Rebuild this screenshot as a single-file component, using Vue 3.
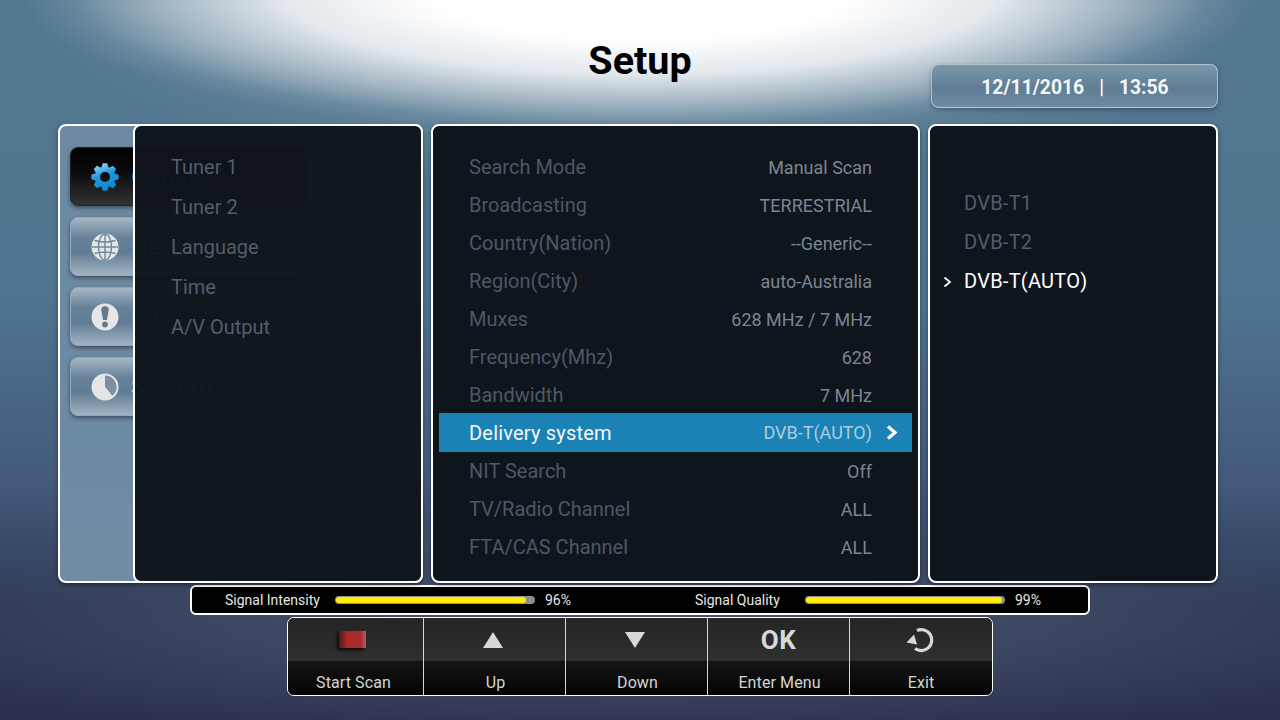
<template>
  <div class="screen">
    <header class="top">
      <h1>Setup</h1>
      <div class="clock"><span>12/11/2016</span><span class="sep">|</span><span>13:56</span></div>
    </header>

    <main class="panels">
      <section class="side">
        <div v-for="(m, i) in sideMenu" :key="m.label" class="side-btn" :class="{ active: i === 0 }">
          <span class="side-icon">
            <svg v-if="m.icon === 'gear'" viewBox="0 0 28 28" width="28" height="28">
              <defs>
                <linearGradient id="gearFill" x1="0.2" y1="0" x2="0.6" y2="1">
                  <stop offset="0" stop-color="#a4dcf6" />
                  <stop offset="0.45" stop-color="#1b9ade" />
                  <stop offset="1" stop-color="#0f85c8" />
                </linearGradient>
              </defs>
              <path fill="url(#gearFill)" fill-rule="evenodd" :d="gearPath" />
            </svg>
            <svg v-else-if="m.icon === 'globe'" viewBox="0 0 28 28" width="28" height="28">
              <circle cx="14" cy="14" r="13.500" fill="#e4e6e8" />
              <g fill="none" stroke="#75879a" stroke-width="1.400">
                <ellipse cx="14" cy="14" rx="6.500" ry="13" />
                <path d="M14 1v26M1 14h26M3.500 7.500q10.500 3 21 0M3.500 20.500q10.500-3 21 0" />
              </g>
            </svg>
            <svg v-else-if="m.icon === 'alert'" viewBox="0 0 28 28" width="28" height="28">
              <circle cx="14" cy="14" r="13.500" fill="#e4e6e8" />
              <path d="M10.200 7a3.800 3.800 0 0 1 7.600 0l-1.900 10h-3.800z" fill="#66798c" />
              <circle cx="14" cy="21.500" r="2.900" fill="#66798c" />
            </svg>
            <svg v-else viewBox="0 0 28 28" width="28" height="28">
              <circle cx="14" cy="14" r="13.500" fill="#e4e6e8" />
              <path d="M14 2.500a11.500 11.500 0 0 1 7.400 20.300l-7.400-8.800z" fill="#7d8e9e" />
            </svg>
          </span>
          <span class="side-label">{{ m.label }}</span>
          <svg v-if="i === 0" class="side-arrow" viewBox="0 0 10 16" width="10" height="16">
            <path d="M1.500 1.500 8 8l-6.500 6.500" fill="none" stroke="#1793d6" stroke-width="2" />
          </svg>
        </div>

        <div class="sub">
          <div v-for="s in subMenu" :key="s" class="sub-item">{{ s }}</div>
        </div>
      </section>

      <section class="settings">
        <div v-for="r in rows" :key="r.name" class="row" :class="{ selected: r.selected }">
          <span class="row-name">{{ r.name }}</span>
          <span class="row-value">{{ r.value }}</span>
          <svg v-if="r.selected" class="row-arrow" viewBox="0 0 12 15" width="12" height="15">
            <path d="M2 1.500 9 7.500 2 13.500" fill="none" stroke="#fff" stroke-width="3.200" />
          </svg>
        </div>
      </section>

      <section class="options">
        <div v-for="o in options" :key="o.name" class="option" :class="{ current: o.current }">
          <svg v-if="o.current" class="option-arrow" viewBox="0 0 10 12" width="10" height="12">
            <path d="M1.500 1.500 7 6l-5.500 4.500" fill="none" stroke="#fff" stroke-width="1.800" />
          </svg>
          {{ o.name }}
        </div>
      </section>
    </main>

    <div class="signal">
      <div v-for="s in signals" :key="s.label" class="meter">
        <span class="meter-label">{{ s.label }}</span>
        <span class="meter-track"><span class="meter-fill" :style="{ width: s.value + '%' }"></span></span>
        <span class="meter-value">{{ s.value }}%</span>
      </div>
    </div>

    <footer class="keys">
      <div class="key">
        <div class="key-top"><span class="red-key"></span></div>
        <div class="key-label">Start Scan</div>
      </div>
      <div class="key">
        <div class="key-top"><span class="tri up"></span></div>
        <div class="key-label">Up</div>
      </div>
      <div class="key">
        <div class="key-top"><span class="tri down"></span></div>
        <div class="key-label">Down</div>
      </div>
      <div class="key">
        <div class="key-top"><span class="ok">OK</span></div>
        <div class="key-label">Enter Menu</div>
      </div>
      <div class="key">
        <div class="key-top">
          <svg viewBox="0 0 30 28" width="30" height="28">
            <path d="M11 4.500A10.500 10.500 0 1 1 9 22.500" fill="none" stroke="#d8d8d8" stroke-width="3.200" />
            <path d="M0.500 16.500 8 8.500 11 18.500z" fill="#d8d8d8" />
          </svg>
        </div>
        <div class="key-label">Exit</div>
      </div>
    </footer>
  </div>
</template>

<script setup>
const sideMenu = [
  { label: 'Config', icon: 'gear' },
  { label: 'Network', icon: 'globe' },
  { label: 'Misc', icon: 'alert' },
  { label: 'System', icon: 'clock' }
]

const subMenu = ['Tuner 1', 'Tuner 2', 'Language', 'Time', 'A/V Output']

const rows = [
  { name: 'Search Mode', value: 'Manual Scan' },
  { name: 'Broadcasting', value: 'TERRESTRIAL' },
  { name: 'Country(Nation)', value: '--Generic--' },
  { name: 'Region(City)', value: 'auto-Australia' },
  { name: 'Muxes', value: '628 MHz / 7 MHz' },
  { name: 'Frequency(Mhz)', value: '628' },
  { name: 'Bandwidth', value: '7 MHz' },
  { name: 'Delivery system', value: 'DVB-T(AUTO)', selected: true },
  { name: 'NIT Search', value: 'Off' },
  { name: 'TV/Radio Channel', value: 'ALL' },
  { name: 'FTA/CAS Channel', value: 'ALL' }
]

const options = [
  { name: 'DVB-T1' },
  { name: 'DVB-T2' },
  { name: 'DVB-T(AUTO)', current: true }
]

const signals = [
  { label: 'Signal Intensity', value: 96 },
  { label: 'Signal Quality', value: 99 }
]

// 8 tooth cog, outer ring plus a round hole
const gearPoint = (r, deg) => {
  const a = (deg * Math.PI) / 180
  return `${(14 + r * Math.sin(a)).toFixed(2)} ${(14 - r * Math.cos(a)).toFixed(2)}`
}
let cog = ''
for (let t = 0; t < 8; t++) {
  const c = t * 45
  cog += `${t ? 'L' : 'M'}${gearPoint(10, c - 22)}L${gearPoint(13.8, c - 9)}L${gearPoint(13.8, c + 9)}L${gearPoint(10, c + 22)}`
}
const gearPath = `${cog}Z M14 9a5 5 0 1 0 0 10a5 5 0 1 0 0-10z`
</script>

<style>
html, body {
  margin: 0;
  background: #3a4560;
}
</style>

<style scoped>
.screen {
  position: relative;
  width: 1280px;
  height: 720px;
  overflow: hidden;
  font-family: Roboto, "Liberation Sans", sans-serif;
  background:
    radial-gradient(ellipse 620px 145px at 640px -10px, #fff 0%, #fff 34%, rgba(232, 236, 240, 0.96) 58%, rgba(176, 192, 203, 0.8) 78%, rgba(130, 156, 174, 0.35) 92%, rgba(120, 150, 170, 0) 100%),
    radial-gradient(ellipse 620px 190px at 640px 0, rgba(150, 175, 190, 0.5) 0%, rgba(130, 158, 176, 0.35) 65%, rgba(110, 140, 160, 0) 100%),
    radial-gradient(ellipse 820px 120px at 640px 625px, rgba(86, 96, 122, 0.7) 0%, rgba(80, 90, 115, 0.4) 55%, rgba(70, 80, 105, 0) 100%),
    linear-gradient(180deg, #53778f 0%, #507590 40%, #43597a 68%, #2d3854 84%, #2a2f4c 100%);
}

.top {
  position: relative;
  height: 124px;
}

h1 {
  margin: 0;
  padding-top: 38px;
  text-align: center;
  font-size: 39.500px;
  line-height: 46px;
  font-weight: 700;
  color: #000;
}

.clock {
  position: absolute;
  left: 931px;
  top: 64px;
  width: 287px;
  height: 44px;
  box-sizing: border-box;
  display: flex;
  align-items: center;
  justify-content: center;
  gap: 15px;
  padding: 3px 0 0 1px;
  border: 1px solid rgba(220, 230, 238, 0.6);
  border-radius: 8px;
  background: linear-gradient(180deg, #7c97aa 0%, #5f7d95 55%, #6f8ba1 100%);
  box-shadow: 0 2px 4px rgba(0, 0, 0, 0.3);
  color: #f4f6f8;
  font-size: 19.300px;
  font-weight: 700;
}

.panels {
  position: relative;
  display: flex;
  gap: 8px;
  padding-left: 58px;
  height: 459px;
}

.side {
  position: relative;
  width: 365px;
  box-sizing: border-box;
  padding: 21px 0 0 10px;
  border: 2px solid #fff;
  border-radius: 8px;
  background: linear-gradient(180deg, #6d8aa2 0%, #6c8aa3 60%, #738ca4 100%);
  box-shadow: 0 2px 4px rgba(0, 0, 0, 0.4);
}

.side-btn {
  position: relative;
  display: flex;
  align-items: center;
  width: 235px;
  height: 59px;
  box-sizing: border-box;
  margin-bottom: 11px;
  padding-left: 20px;
  border-radius: 8px;
  border: 1px solid #93a8ba;
  background: linear-gradient(180deg, #a6b7c5 0%, #668199 35%, #607b94 60%, #a2b3c2 100%);
  box-shadow: 0 2px 4px rgba(0, 0, 0, 0.45);
}

.side-btn.active {
  border-color: #222;
  background: linear-gradient(180deg, #000 0%, #0c0c0c 45%, #333 100%);
}

.side-btn.active .side-label {
  color: #1793d6;
}

.side-icon {
  display: flex;
  width: 28px;
  height: 28px;
}

.side-label {
  margin-left: 12px;
  font-size: 24.500px;
  color: #dfe5ea;
}

.side-arrow {
  position: absolute;
  right: 28px;
  top: 22px;
}

.sub {
  position: absolute;
  left: 73px;
  top: -2px;
  width: 290px;
  height: 459px;
  box-sizing: border-box;
  padding-top: 21px;
  border: 2px solid #fff;
  border-radius: 8px;
  background: rgba(14, 20, 27, 0.98);
}

.sub-item {
  height: 40px;
  line-height: 40px;
  padding-left: 36px;
  font-size: 20px;
  color: #515e6b;
}

.settings {
  width: 489px;
  height: 459px;
  box-sizing: border-box;
  padding: 22px 6px 0;
  border: 2px solid #fff;
  border-radius: 8px;
  background: #0f151c;
  box-shadow: 0 2px 4px rgba(0, 0, 0, 0.4);
}

.row {
  position: relative;
  display: flex;
  justify-content: space-between;
  align-items: center;
  height: 38px;
  padding: 0 40px 0 30px;
  font-size: 20px;
  color: #4c5864;
}

.row-value {
  font-size: 18px;
  color: #7a8591;
}

.row.selected {
  height: 39px;
  margin-top: -1px;
  background: #1a82b4;
  color: #f6f8fa;
  letter-spacing: 0.2px;
}

.row.selected .row-value {
  letter-spacing: 0;
  color: #a9cde0;
}

.row-arrow {
  position: absolute;
  right: 14px;
  top: 12px;
}

.options {
  width: 290px;
  height: 459px;
  box-sizing: border-box;
  padding-top: 58px;
  border: 2px solid #fff;
  border-radius: 8px;
  background: #0f151c;
  box-shadow: 0 2px 4px rgba(0, 0, 0, 0.4);
}

.option {
  position: relative;
  height: 39px;
  line-height: 39px;
  padding-left: 34px;
  font-size: 20px;
  letter-spacing: 0.25px;
  color: #515e6b;
}

.option.current {
  color: #fff;
}

.option-arrow {
  position: absolute;
  left: 13px;
  top: 14px;
}

.signal {
  display: flex;
  width: 900px;
  height: 30px;
  box-sizing: border-box;
  margin: 2px 0 0 190px;
  border: 2px solid #fff;
  border-radius: 6px;
  background: #000;
}

.meter {
  flex: none;
  display: flex;
  align-items: center;
  width: 470px;
  padding-left: 33px;
  box-sizing: border-box;
  color: #e6e6e6;
  font-size: 14px;
}

.meter + .meter {
  width: 426px;
}

.meter-label {
  width: 110px;
}

.meter-track {
  display: block;
  width: 200px;
  height: 8px;
  box-sizing: border-box;
  border-radius: 4px;
  background: #8d8d8d;
  overflow: hidden;
  padding: 1px;
}

.meter-fill {
  display: block;
  height: 100%;
  background: #ffee00;
  border-radius: 3px;
}

.meter-value {
  margin-left: 10px;
}

.keys {
  display: flex;
  width: 706px;
  height: 79px;
  box-sizing: border-box;
  margin: 2px 0 0 287px;
  border: 1px solid #fff;
  border-radius: 7px;
  overflow: hidden;
}

.key {
  width: 142px;
  box-sizing: border-box;
  border-left: 1px solid #d8d8d8;
}

.key:first-child {
  width: 135px;
  border-left: 0;
}

.key:last-child {
  flex: 1;
}

.key-top {
  display: flex;
  align-items: center;
  justify-content: center;
  height: 43px;
  background: linear-gradient(180deg, #252525 0%, #2f2f2f 100%);
}

.key-label {
  height: 34px;
  line-height: 43px;
  padding-left: 2px;
  text-align: center;
  font-size: 16px;
  letter-spacing: 0.1px;
  color: #d4d4d4;
  background: linear-gradient(180deg, #141414 0%, #050505 100%);
}

.key:first-child .key-label {
  padding: 0 4px 0 0;
}

.key:last-child .key-label {
  padding: 0;
}

.red-key {
  display: block;
  width: 27px;
  height: 17px;
  margin: -1px 0 0 -7px;
  background: linear-gradient(90deg, #5a1010 0%, #a82c2c 30%, #a82c2c 80%, #bf5a5a 100%);
  box-shadow: -2px 2px 3px rgba(0, 0, 0, 0.8);
}

.tri {
  display: block;
  width: 0;
  height: 0;
  margin-left: -4px;
  border-left: 10px solid transparent;
  border-right: 10px solid transparent;
}

.tri.up {
  border-bottom: 16px solid #d8d8d8;
}

.tri.down {
  border-top: 16px solid #d8d8d8;
}

.ok {
  font-size: 26px;
  font-weight: 700;
  letter-spacing: 0.5px;
  color: #d8d8d8;
}
</style>
